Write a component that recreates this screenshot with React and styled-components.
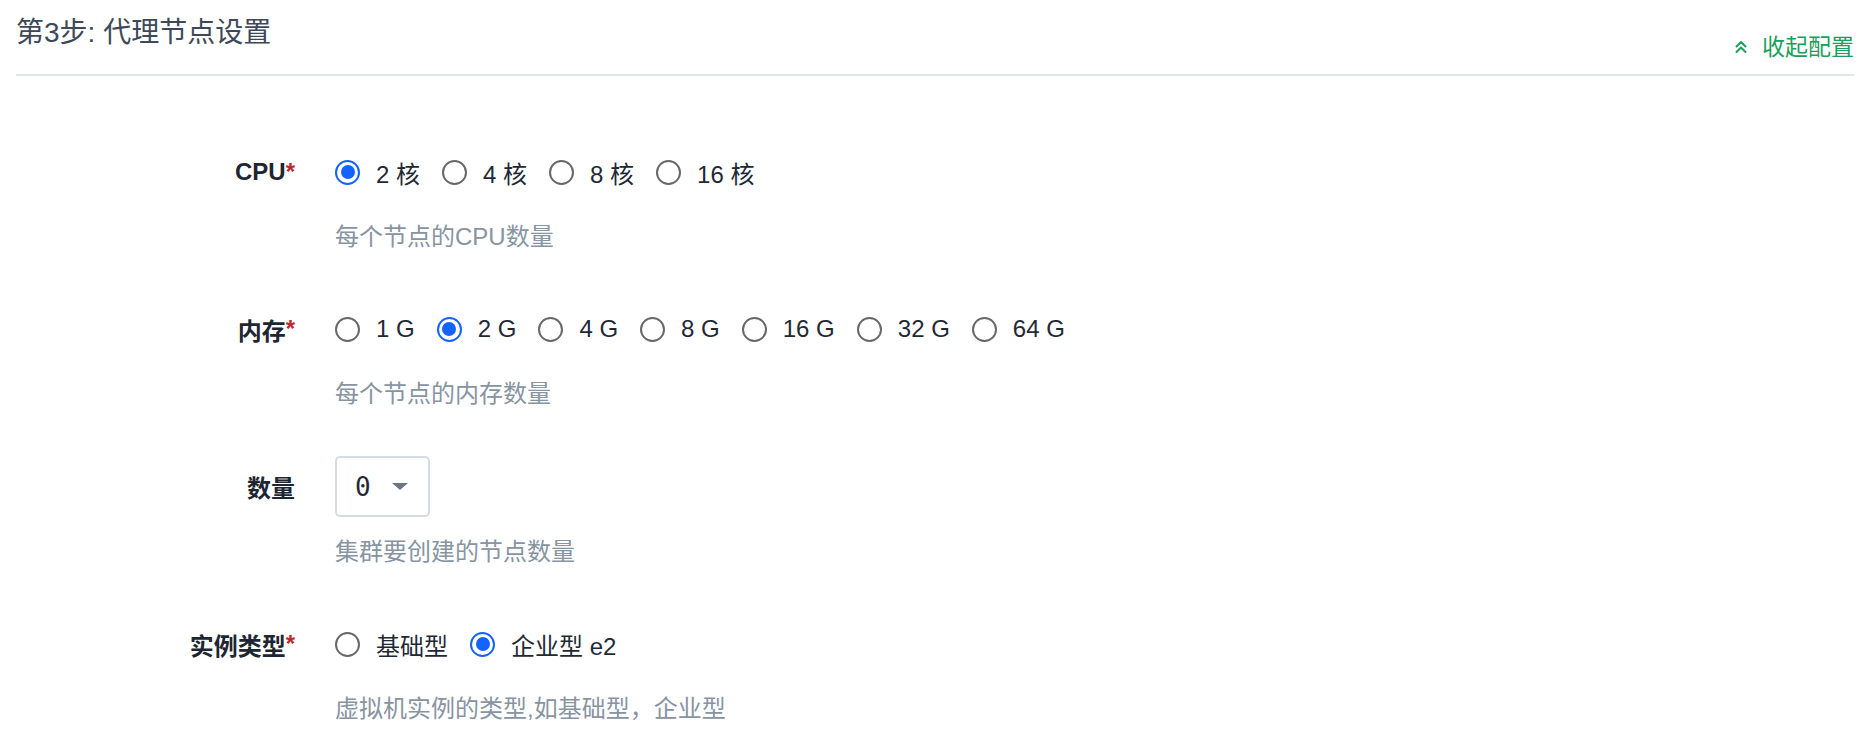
import React, { useState } from "react";
import styled, { createGlobalStyle } from "styled-components";

const Global = createGlobalStyle`
  html, body { margin: 0; padding: 0; background: #ffffff; }
  body {
    font-family: "Liberation Sans", "Noto Sans CJK SC", sans-serif;
    color: #1f2935;
  }
  * { box-sizing: border-box; }
`;

const Page = styled.div`
  padding: 0 14px 0 16px;
`;

const Header = styled.header`
  display: flex;
  justify-content: space-between;
  align-items: flex-start;
  height: 76px;
  padding-top: 13px;
  border-bottom: 2px solid #dde5ee;
`;

const Title = styled.h2`
  margin: 0;
  font-size: 28px;
  line-height: 40px;
  font-weight: 400;
  color: #3d4958;
`;

const Toggle = styled.button`
  display: flex;
  align-items: center;
  gap: 14px;
  margin-top: 18px;
  padding: 0;
  border: 0;
  background: none;
  font-family: inherit;
  font-size: 23px;
  line-height: 32px;
  color: #18a05c;
  cursor: pointer;
`;

const Form = styled.div`
  padding-top: 66px;
`;

const Group = styled.div`
  display: grid;
  grid-template-columns: 279px 1fr;
  column-gap: 40px;
  align-items: start;
  margin-bottom: 46px;
`;

const Label = styled.div`
  display: flex;
  align-items: center;
  justify-content: flex-end;
  height: ${(p) => p.$h}px;
  font-size: 24px;
  font-weight: 600;
  color: #1d2632;
`;

const Required = styled.span`
  color: #c3262c;
  font-weight: 700;
`;

const Field = styled.div`
  display: flex;
  flex-direction: column;
`;

const ControlLine = styled.div`
  display: flex;
  align-items: center;
  min-height: 60px;
`;

const Option = styled.label`
  display: inline-flex;
  align-items: center;
  gap: 16px;
  margin-right: 22px;
  font-size: 24px;
  color: #1f2935;
  cursor: pointer;
`;

const Circle = styled.span`
  width: 25px;
  height: 25px;
  border-radius: 50%;
  border: 2px solid ${(p) => (p.$checked ? "#1463ff" : "#686868")};
  display: grid;
  place-items: center;
  flex: none;
  &::after {
    content: "";
    width: 14px;
    height: 14px;
    border-radius: 50%;
    background: ${(p) => (p.$checked ? "#1463ff" : "transparent")};
  }
`;

const Hint = styled.div`
  margin-top: 19px;
  font-size: 24px;
  line-height: 32px;
  color: #8794a2;
`;

const Select = styled.div`
  display: flex;
  align-items: center;
  gap: 21px;
  width: 95px;
  height: 61px;
  padding-left: 18px;
  border: 2px solid #d4dce6;
  border-radius: 5px;
  font-family: "DejaVu Sans Mono", monospace;
  font-size: 26px;
  color: #1f2935;
`;

const Caret = styled.span`
  width: 0;
  height: 0;
  border-left: 8px solid transparent;
  border-right: 8px solid transparent;
  border-top: 7px solid #6b7785;
`;

function ChevronsUp() {
  return (
    <svg width="14" height="14" viewBox="0 0 14 14" fill="none" stroke="currentColor" strokeWidth="2" strokeLinecap="round" strokeLinejoin="round">
      <polyline points="2.5,6.5 7,2 11.5,6.5" />
      <polyline points="2.5,12 7,7.5 11.5,12" />
    </svg>
  );
}

function RadioGroup({ options, value, onChange }) {
  return (
    <ControlLine>
      {options.map((o) => (
        <Option key={o} onClick={() => onChange(o)}>
          <Circle $checked={value === o} />
          <span>{o}</span>
        </Option>
      ))}
    </ControlLine>
  );
}

function FormGroup({ label, required, hint, lineHeight = 60, children }) {
  return (
    <Group>
      <Label $h={lineHeight}>
        {label}
        {required && <Required>*</Required>}
      </Label>
      <Field>
        {children}
        <Hint>{hint}</Hint>
      </Field>
    </Group>
  );
}

export default function App() {
  const [cpu, setCpu] = useState("2 核");
  const [mem, setMem] = useState("2 G");
  const [type, setType] = useState("企业型 e2");
  return (
    <Page>
      <Global />
      <Header>
        <Title>第3步: 代理节点设置</Title>
        <Toggle>
          <ChevronsUp />
          收起配置
        </Toggle>
      </Header>
      <Form>
        <FormGroup label="CPU" required hint="每个节点的CPU数量">
          <RadioGroup options={["2 核", "4 核", "8 核", "16 核"]} value={cpu} onChange={setCpu} />
        </FormGroup>
        <FormGroup label="内存" required hint="每个节点的内存数量">
          <RadioGroup
            options={["1 G", "2 G", "4 G", "8 G", "16 G", "32 G", "64 G"]}
            value={mem}
            onChange={setMem}
          />
        </FormGroup>
        <FormGroup label="数量" hint="集群要创建的节点数量" lineHeight={61}>
          <ControlLine>
            <Select>
              0
              <Caret />
            </Select>
          </ControlLine>
        </FormGroup>
        <FormGroup label="实例类型" required hint="虚拟机实例的类型,如基础型，企业型">
          <RadioGroup options={["基础型", "企业型 e2"]} value={type} onChange={setType} />
        </FormGroup>
      </Form>
    </Page>
  );
}
